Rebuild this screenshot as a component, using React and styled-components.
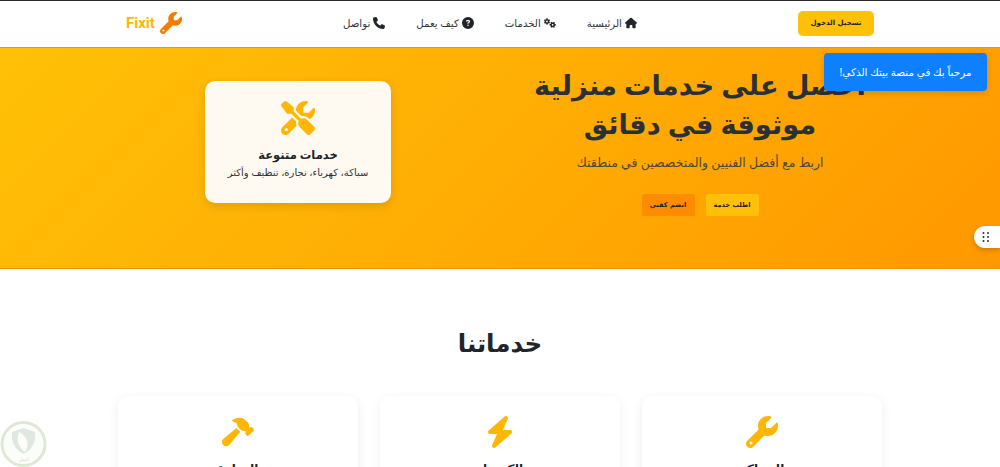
import React from 'react'
import styled, { createGlobalStyle } from 'styled-components'
import { FaHouse, FaGears, FaCircleQuestion, FaPhone, FaWrench, FaScrewdriverWrench, FaHammer, FaBolt } from 'react-icons/fa6'

const Global = createGlobalStyle`
	html, body {
		margin: 0;
		height: 467px;
		overflow: hidden;
		background: #fff;
	}
	* {
		box-sizing: border-box;
	}
	body {
		font-family: "Noto Sans", "DejaVu Sans", sans-serif;
		color: #212529;
	}
`

const Page = styled.div`
	direction: rtl;
	width: 1000px;
	height: 467px;
	overflow: hidden;
	position: relative;
`

const Navbar = styled.header`
	height: 47px;
	border-top: 1px solid #2b2b2b;
	background: #fff;
	display: flex;
	align-items: center;
	justify-content: space-between;
	padding: 0 126px 2px;
`

const LoginButton = styled.button`
	width: 76px;
	height: 25px;
	border: 0;
	border-radius: 5px;
	background: #ffc107;
	color: #212529;
	font-family: "DejaVu Sans", sans-serif;
	font-size: 7px;
	font-weight: 700;
	padding: 0;
`

const NavList = styled.nav`
	display: flex;
	gap: 31px;
`

const NavLink = styled.a`
	display: flex;
	align-items: center;
	gap: 3px;
	font-size: 10.2px;
	color: #333;
	svg {
		color: #212529;
		font-size: 12px;
	}
`

const Brand = styled.div`
	direction: ltr;
	display: flex;
	align-items: center;
	gap: 5px;
	font-family: Roboto, sans-serif;
	font-size: 15px;
	font-weight: 700;
	color: #ffb606;
	svg {
		color: #f57c00;
		font-size: 22px;
	}
`

const Hero = styled.section`
	height: 222px;
	background: linear-gradient(135deg, #ffc107, #ff9800);
	border-top: 1px solid #e89a00;
	border-bottom: 1px solid #ee9000;
	display: grid;
	grid-template-columns: 400px 404px;
	padding: 0 100px 0 96px;
`

const HeroText = styled.div`
	display: flex;
	flex-direction: column;
	align-items: center;
	padding-top: 17px;
`

const HeroTitle = styled.h1`
	margin: 0;
	width: 380px;
	text-align: center;
	font-size: 27.3px;
	font-weight: 700;
	line-height: 39px;
	color: #2b3035;
`

const HeroLead = styled.p`
	margin: 10px 0 21px;
	font-size: 12.5px;
	line-height: 20px;
	color: #4a4a3a;
`

const HeroActions = styled.div`
	display: flex;
	gap: 11px;
`

const HeroButton = styled.button`
	width: 53px;
	height: 22px;
	border: 0;
	border-radius: 2px;
	background: ${p => p.$accent ? '#ff8c00' : '#ffc107'};
	color: #212529;
	font-family: "DejaVu Sans", sans-serif;
	font-size: 6.6px;
	font-weight: 700;
	padding: 0;
`

const HeroSide = styled.div`
	display: flex;
	justify-content: center;
	padding-top: 33px;
`

const FloatCard = styled.div`
	width: 186px;
	height: 122px;
	border-radius: 10px;
	background: #fffaf1;
	box-shadow: 0 3px 10px rgba(0, 0, 0, 0.12);
	display: flex;
	flex-direction: column;
	align-items: center;
	padding-top: 20px;
	svg {
		color: #ffb606;
		font-size: 34px;
	}
`

const FloatTitle = styled.h3`
	margin: 12px 0 3px;
	font-size: 11.5px;
	font-weight: 700;
	color: #212529;
`

const FloatText = styled.p`
	margin: 0;
	font-size: 10px;
	color: #333;
`

const Services = styled.section`
	padding: 54px 118px 0;
`

const SectionTitle = styled.h2`
	margin: 0 0 33px;
	text-align: center;
	font-size: 24.5px;
	line-height: 40px;
	font-weight: 700;
	color: #212529;
`

const ServiceGrid = styled.div`
	display: grid;
	grid-template-columns: repeat(3, 240px);
	justify-content: space-between;
`

const ServiceCard = styled.article`
	height: 200px;
	border-radius: 10px;
	background: #fff;
	box-shadow: 0 3px 12px rgba(0, 0, 0, 0.07);
	display: flex;
	flex-direction: column;
	align-items: center;
	padding-top: 20px;
	svg {
		color: #ffb606;
		font-size: 32px;
	}
`

const ServiceName = styled.h3`
	margin: 12px 0 0;
	font-size: 12px;
	font-weight: 700;
	color: #212529;
`

const Toast = styled.div`
	position: absolute;
	left: 824px;
	top: 53px;
	width: 163px;
	height: 38px;
	border-radius: 4px;
	background: #0d7fff;
	color: #fff;
	font-size: 10.4px;
	display: flex;
	align-items: center;
	justify-content: center;
	box-shadow: 0 2px 6px rgba(0, 0, 0, 0.15);
`

const DragHandle = styled.div`
	position: absolute;
	right: 0;
	top: 226px;
	width: 26px;
	height: 22px;
	border-radius: 11px 0 0 11px;
	background: #fff;
	box-shadow: 0 2px 5px rgba(0, 0, 0, 0.2);
	display: flex;
	align-items: center;
	padding-left: 8px;
	direction: ltr;
`

const Watermark = styled.svg`
	position: absolute;
	left: 0;
	top: 421px;
	width: 47px;
	height: 46px;
`

const services = [
	{ name: 'السباكة', Icon: FaWrench },
	{ name: 'الكهرباء', Icon: FaBolt },
	{ name: 'النجارة', Icon: FaHammer },
]

const links = [
	{ label: 'الرئيسية', Icon: FaHouse },
	{ label: 'الخدمات', Icon: FaGears },
	{ label: 'كيف يعمل', Icon: FaCircleQuestion },
	{ label: 'تواصل', Icon: FaPhone },
]

export default function App() {
	return (
		<Page>
			<Global />
			<Navbar>
				<LoginButton>تسجيل الدخول</LoginButton>
				<NavList>
					{links.map(({ label, Icon }) => (
						<NavLink key={label}><Icon />{label}</NavLink>
					))}
				</NavList>
				<Brand>Fixit <FaWrench /></Brand>
			</Navbar>
			<Hero>
				<HeroText>
					<HeroTitle>احصل على خدمات منزلية موثوقة في دقائق</HeroTitle>
					<HeroLead>اربط مع أفضل الفنيين والمتخصصين في منطقتك</HeroLead>
					<HeroActions>
						<HeroButton>اطلب خدمة</HeroButton>
						<HeroButton $accent>انضم كفني</HeroButton>
					</HeroActions>
				</HeroText>
				<HeroSide>
					<FloatCard>
						<FaScrewdriverWrench />
						<FloatTitle>خدمات متنوعة</FloatTitle>
						<FloatText>سباكة، كهرباء، نجارة، تنظيف وأكثر</FloatText>
					</FloatCard>
				</HeroSide>
			</Hero>
			<Services>
				<SectionTitle>خدماتنا</SectionTitle>
				<ServiceGrid>
					{services.map(({ name, Icon }) => (
						<ServiceCard key={name}>
							<Icon />
							<ServiceName>{name}</ServiceName>
						</ServiceCard>
					))}
				</ServiceGrid>
			</Services>
			<Toast>مرحباً بك في منصة بيتك الذكي!</Toast>
			<DragHandle>
				<svg width="8" height="10" viewBox="0 0 8 10" fill="#333">
					{[1, 5, 9].map(y => [1.5, 6].map(x => <circle key={`${x}-${y}`} cx={x} cy={y} r="1" />))}
				</svg>
			</DragHandle>
			<Watermark viewBox="0 0 47 46">
				<circle cx="23.5" cy="23" r="21.5" fill="#fbfdf9" stroke="#dde9d2" strokeWidth="3" />
				<path d="M23.5 7 L35 11 C36 20 33 28 23.5 33 C14 28 11 20 12 11 Z" fill="#dfe8e0" />
				<path d="M19 11 C29 16 29 25 25 31 C18 26 16 18 19 11 Z" fill="#fbfdf9" />
				<text x="24" y="40" textAnchor="middle" fontSize="5" fill="#d5ddcc">كميل</text>
			</Watermark>
		</Page>
	)
}
